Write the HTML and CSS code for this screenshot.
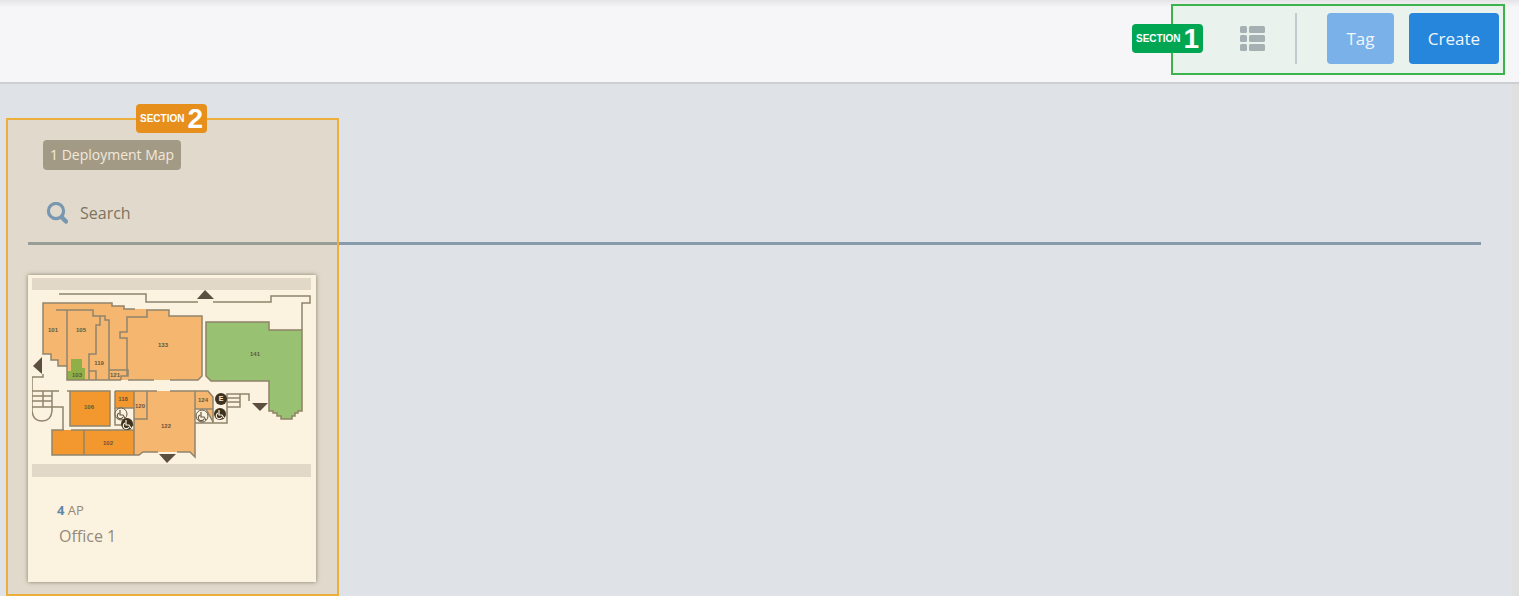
FILE: index.html
```
<!DOCTYPE html>
<html lang="en">

<head>
	<meta charset="UTF-8">
	<meta name="viewport" content="width=device-width, initial-scale=1.0">
	<title>Deployment Maps</title>
	<link rel="stylesheet" href="styles.css">
</head>

<body>
	<header class="toolbar">
		<div class="tools">
			<span class="section-tag section-tag-green">SECTION <b>1</b></span>
			<button type="button" class="list-toggle" aria-label="List view">
				<svg width="25" height="25" viewBox="0 0 25 25" fill="#a5b0b2">
					<rect x="0" y="0" width="7" height="7" rx="1.5" />
					<rect x="9" y="0" width="16" height="7" rx="1.5" />
					<rect x="0" y="9" width="7" height="7" rx="1.5" />
					<rect x="9" y="9" width="16" height="7" rx="1.5" />
					<rect x="0" y="18" width="7" height="7" rx="1.5" />
					<rect x="9" y="18" width="16" height="7" rx="1.5" />
				</svg>
			</button>
			<span class="divider"></span>
			<button type="button" class="btn btn-tag">Tag</button>
			<button type="button" class="btn btn-create">Create</button>
		</div>
	</header>

	<main class="content">
		<div class="count">1 Deployment Map</div>

		<div class="search">
			<label for="search" aria-label="Search">
				<svg width="22" height="22" viewBox="0 0 22 22" fill="none" stroke="#6293c8">
					<circle cx="10" cy="9" r="7.6" stroke-width="3.2" />
					<path d="M16 15.5L20 19.5" stroke-width="4.5" stroke-linecap="round" />
				</svg>
			</label>
			<input id="search" type="text" placeholder="Search">
		</div>

		<article class="card">
			<div class="floorplan">
				<svg viewBox="0 0 279 174" role="img" aria-label="Office 1 floor plan">
					<!-- rooms -->
					<g fill="#f7b879">
						<path d="M11 13H80V16H92V19H115V20H137V26H170V86L166 90H35V76H26V70H19V64H11Z" />
						<path d="M102 101H163V167L158 162H111L107 165H102Z" />
						<path d="M163 101H176L181 107V132L174 119H163Z" />
					</g>
					<path fill="#7eb04a" d="M39 69H50V78H53V90H35V81H39Z" />
					<g fill="#f3942c">
						<path d="M38 101H78V136H38Z" />
						<path d="M83 101H102V118H83Z" />
						<path d="M20 140H102V165H20Z" />
					</g>
					<path fill="#88c57b" stroke="#7c7b70" stroke-width="1.5" d="M174 32H237V40H270V121H266V123H263V126H260V129H249V126H245V123H241V121H237V91H179L174 86Z" />

					<!-- walls -->
					<g fill="none" stroke="#7f7d76" stroke-width="1.5">
						<path d="M27 4H114V12H166M181 12H239V6H278V13H270V40" />
						<path d="M103 19H92V16H80V13H11V64H19V70H26V76H35V90H89M96 90H122M138 90H166L170 86V26H137V20H115V27H95V42H88V48H95V86" />
						<path d="M24 20H61V26H73V30H77V90M35 20V76M68 26V35H64V64H57V90M57 81H64V90M77 80H96V86H89V90" />
						<path d="M35 101H78V136H38V101M83 101H125M138 101H176L181 107V133M83 101V118H102M102 101V165M115 101V129H102" />
						<path d="M32 140H20V165H107L111 162H126M145 162H158L163 167V101M39 140H102M52 140V165M83 118V135H102" />
						<path d="M163 119H181M163 133H195V104H217V111M174 119L181 132M195 108H208M195 112H208M195 117H208V104" />
						<path d="M11 84V87H0V101H27M0 101V121Q1 131 10 131Q19 131 20 121V101M11 101V117M0 106H20M0 111H20M0 117H31V140" />
					</g>

					<!-- entrances -->
					<g fill="#403f40">
						<path d="M165 9H182L173 0Z" />
						<path d="M1 76L10 67V84Z" />
						<path d="M220 113H236L228 121Z" />
						<path d="M127 164H144L135 173Z" />
					</g>

					<!-- lifts and accessible toilets -->
					<g fill="#fff" stroke="#4a4744">
						<circle cx="89" cy="124" r="6" />
						<circle cx="170" cy="126" r="6" />
					</g>
					<g fill="#1d1a18">
						<circle cx="95" cy="134" r="6" />
						<circle cx="188" cy="124" r="6" />
						<circle cx="189" cy="109" r="6" />
					</g>
					<g fill="none" stroke="#4a4744" stroke-width="1.2">
						<path d="M88 120V125H91L93 128M87 123A3 3 0 1 0 91 127" />
						<path d="M169 122V127H172L174 130M168 125A3 3 0 1 0 172 129" />
					</g>
					<g fill="none" stroke="#fff" stroke-width="1.2">
						<path d="M94 130V135H97L99 138M93 133A3 3 0 1 0 97 137" />
						<path d="M187 120V125H190L192 128M186 123A3 3 0 1 0 190 127" />
					</g>
					<text class="lift" x="189" y="111">E</text>

					<g class="room">
						<text x="21" y="42">101</text>
						<text x="49" y="42">105</text>
						<text x="67" y="75">119</text>
						<text x="131" y="57">133</text>
						<text x="45" y="87">103</text>
						<text x="83" y="87">121</text>
						<text x="223" y="66">141</text>
						<text x="57" y="119">106</text>
						<text x="91" y="111">118</text>
						<text x="108" y="118">120</text>
						<text x="134" y="138">122</text>
						<text x="171" y="112">124</text>
						<text x="76" y="155">102</text>
					</g>
				</svg>
			</div>
			<div class="card-body">
				<div class="ap"><b>4</b> AP</div>
				<div class="name">Office 1</div>
			</div>
		</article>

		<div class="highlight">
			<span class="section-tag section-tag-orange">SECTION <b>2</b></span>
		</div>
	</main>
</body>

</html>
```
FILE: styles.css
```
* {
	box-sizing: border-box;
}

body {
	margin: 0;
	min-height: 100vh;
	display: flex;
	flex-direction: column;
	font-family: "Open Sans", "Noto Sans", sans-serif;
	background-color: #dfe2e6;
}

.toolbar {
	display: flex;
	justify-content: flex-end;
	padding: 4px 14px 7px;
	border-bottom: 2px solid #cbcfd4;
	background: linear-gradient(#e4e4e6, #f6f6f8 7px);
}

.tools {
	position: relative;
	display: flex;
	align-items: center;
	padding: 7px 4px 9px 67px;
	border: 2px solid #3cb44b;
	background-color: #e9f2ed;
}

.list-toggle {
	display: flex;
	padding: 0;
	border: 0;
	background: none;
}

.divider {
	width: 2px;
	height: 51px;
	margin: 0 30px;
	background-color: #c0cccb;
}

.btn {
	height: 51px;
	border: 0;
	border-radius: 4px;
	font-family: inherit;
	font-size: 17px;
	color: #f0f6fb;
}

.btn-tag {
	width: 67px;
	margin-right: 15px;
	background-color: #7ab1e8;
}

.btn-create {
	width: 90px;
	background-color: #2686dc;
}

.section-tag {
	position: absolute;
	display: flex;
	align-items: center;
	justify-content: space-between;
	width: 71px;
	height: 29px;
	padding: 0 4px;
	border-radius: 4px;
	font-family: "Liberation Sans", Arial, sans-serif;
	font-size: 10px;
	font-weight: bold;
	color: white;
}

.section-tag b {
	font-size: 28px;
	line-height: 29px;
}

.section-tag-green {
	top: 18px;
	left: -41px;
	background-color: #00a651;
}

.section-tag-orange {
	top: -16px;
	left: 128px;
	background-color: #e68f1c;
}

.content {
	position: relative;
	flex: 1;
	padding: 56px 31px 14px 28px;
	border-right: 7px solid #e0e0e0;
}

.count {
	width: fit-content;
	margin-left: 15px;
	padding: 0 7px;
	border-radius: 4px;
	background-color: #969794;
	color: #f4f4f4;
	font-size: 14px;
	line-height: 30px;
}

.search {
	display: flex;
	align-items: center;
	gap: 12px;
	height: 75px;
	padding: 14px 18px 0;
	margin-bottom: 30px;
	border-bottom: 3px solid #879baa;
}

.search label {
	display: flex;
}

.search input {
	flex: 1;
	padding: 0;
	border: 0;
	outline: 0;
	background: none;
	font-family: inherit;
	font-size: 16px;
	color: #686866;
}

.search input::placeholder {
	color: #686866;
	opacity: 1;
}

.card {
	width: 288px;
	padding: 3px 5px 0 4px;
	background-color: white;
	box-shadow: 0 0 4px rgba(0, 0, 0, 0.5);
}

.floorplan {
	border-top: 12px solid #dfe1e3;
	border-bottom: 13px solid #dfe1e3;
}

.floorplan svg {
	display: block;
	width: 100%;
}

.room {
	font-family: "Liberation Sans", Arial, sans-serif;
	font-size: 6px;
	font-weight: bold;
	text-anchor: middle;
	fill: #4a463e;
}

.lift {
	font-family: "Liberation Sans", Arial, sans-serif;
	font-size: 7px;
	font-weight: bold;
	text-anchor: middle;
	fill: white;
}

.card-body {
	padding: 20px 25px 32px;
	color: #838387;
}

.ap {
	font-size: 13px;
	line-height: 26px;
}

.ap b {
	color: #4580c1;
}

.name {
	padding-left: 2px;
	font-size: 16px;
	line-height: 27px;
}

/* tinted frame laid over the map list */
.highlight {
	position: absolute;
	top: 34px;
	bottom: 0;
	left: 6px;
	width: 333px;
	border: 2px solid #ecae3c;
	background-color: rgba(236, 174, 60, 0.16);
	pointer-events: none;
}
```
